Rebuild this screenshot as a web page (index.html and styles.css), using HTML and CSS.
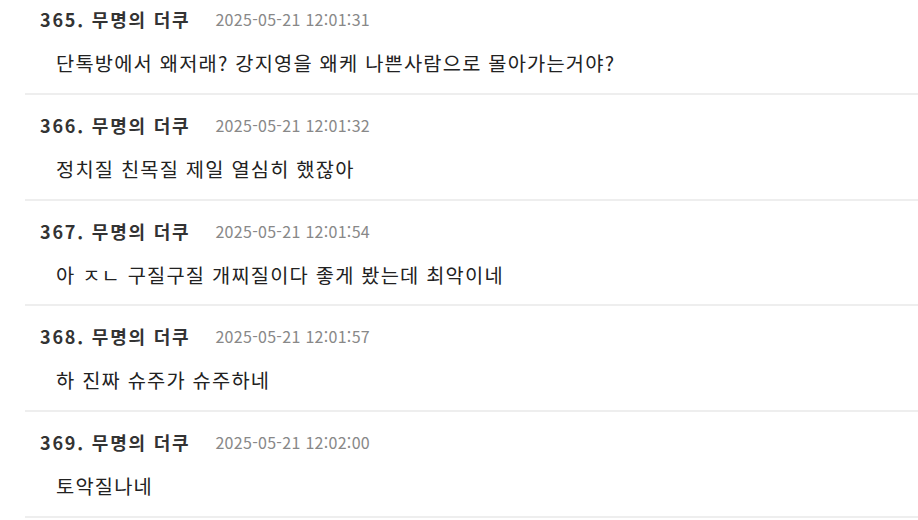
FILE: index.html
```html
<!DOCTYPE html>
<html lang="ko">

<head>
  <meta charset="UTF-8">
  <meta name="viewport" content="width=device-width, initial-scale=1.0">
  <title>댓글</title>
  <link rel="stylesheet" href="styles.css">
</head>

<body>
  <ul class="comment-list">
    <li class="comment">
      <div class="comment-head">
        <span class="comment-name">365. 무명의 더쿠</span>
        <span class="comment-date">2025-05-21 12:01:31</span>
      </div>
      <p class="comment-body">단톡방에서 왜저래? 강지영을 왜케 나쁜사람으로 몰아가는거야?</p>
    </li>
    <li class="comment">
      <div class="comment-head">
        <span class="comment-name">366. 무명의 더쿠</span>
        <span class="comment-date">2025-05-21 12:01:32</span>
      </div>
      <p class="comment-body">정치질 친목질 제일 열심히 했잖아</p>
    </li>
    <li class="comment">
      <div class="comment-head">
        <span class="comment-name">367. 무명의 더쿠</span>
        <span class="comment-date">2025-05-21 12:01:54</span>
      </div>
      <p class="comment-body">아 ㅈㄴ 구질구질 개찌질이다 좋게 봤는데 최악이네</p>
    </li>
    <li class="comment">
      <div class="comment-head">
        <span class="comment-name">368. 무명의 더쿠</span>
        <span class="comment-date">2025-05-21 12:01:57</span>
      </div>
      <p class="comment-body">하 진짜 슈주가 슈주하네</p>
    </li>
    <li class="comment">
      <div class="comment-head">
        <span class="comment-name">369. 무명의 더쿠</span>
        <span class="comment-date">2025-05-21 12:02:00</span>
      </div>
      <p class="comment-body">토악질나네</p>
    </li>
  </ul>
</body>

</html>
```

FILE: styles.css
```css
body {
  font-family: "Noto Sans CJK KR", "Noto Sans", sans-serif;
  margin: 0;
  padding: 0;
  background: #fff;
  color: #222;
  overflow: hidden;
}

.comment-list {
  list-style: none;
  margin: -10.7px 0 0 25px;
  padding: 0;
}

.comment {
  padding: 18px 0 15.7px;
  border-bottom: 2px solid #eee;
}

.comment-head {
  display: flex;
  align-items: center;
  gap: 25px;
  height: 24px;
  padding-left: 15px;
}

.comment-name {
  font-size: 18px;
  font-weight: bold;
  letter-spacing: 1.8px;
  color: #333;
}

.comment-date {
  font-size: 16px;
  letter-spacing: 0.3px;
  color: #888;
}

.comment-body {
  margin: 18px 0 0;
  padding-left: 31px;
  font-size: 19.8px;
  letter-spacing: 1.2px;
  line-height: 28px;
  color: #222;
}
```
